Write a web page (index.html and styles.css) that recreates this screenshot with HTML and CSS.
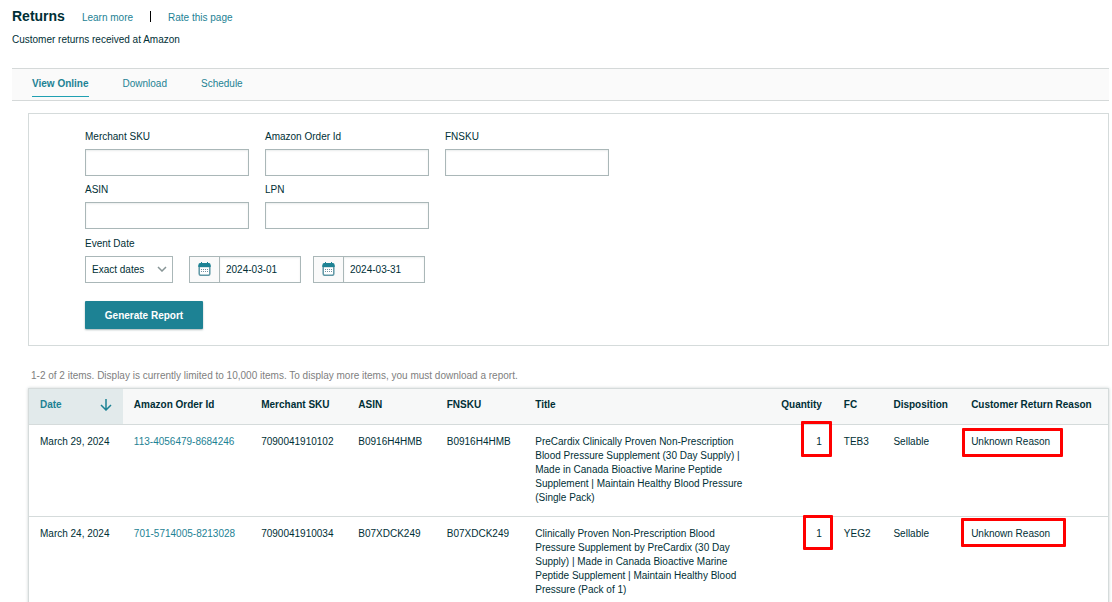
FILE: index.html
```html
<!DOCTYPE html>
<html lang="en">
<head>
<meta charset="utf-8">
<title>Returns</title>
<link rel="stylesheet" href="styles.css">
</head>
<body>
<header class="page-header">
  <div class="title-row">
    <h1 class="page-title">Returns</h1>
    <a class="link" href="#">Learn more</a>
    <span class="divider"></span>
    <a class="link" href="#">Rate this page</a>
  </div>
  <p class="subtitle">Customer returns received at Amazon</p>
</header>
<nav class="tabs">
  <a class="tab tab-active" href="#">View Online</a>
  <a class="tab" href="#">Download</a>
  <a class="tab" href="#">Schedule</a>
</nav>
<main class="content">
  <form class="filters">
    <div class="fields">
      <div class="field"><label for="sku">Merchant SKU</label><input class="box" id="sku" type="text"></div>
      <div class="field"><label for="order">Amazon Order Id</label><input class="box" id="order" type="text"></div>
      <div class="field"><label for="fnsku">FNSKU</label><input class="box" id="fnsku" type="text"></div>
      <div class="field"><label for="asin">ASIN</label><input class="box" id="asin" type="text"></div>
      <div class="field"><label for="lpn">LPN</label><input class="box" id="lpn" type="text"></div>
    </div>
    <div class="field">
      <label for="range">Event Date</label>
      <div class="dates">
        <div class="select-wrap">
          <select class="box select" id="range"><option>Exact dates</option></select>
          <svg class="chevron" width="10" height="6" viewBox="0 0 10 6" fill="none" stroke="#879596" stroke-width="1.5" aria-hidden="true"><path d="M1 1l4 4 4-4"/></svg>
        </div>
        <div class="date">
          <span class="date-icon"><svg width="13" height="14" viewBox="0 0 13 14" aria-hidden="true"><path fill="#1d8294" d="M2 1h1V0h1v1h5V0h1v1h1a1.500 1.500 0 0 1 1.500 1.500V5H.5V2.500A1.500 1.500 0 0 1 2 1z"/><path fill="#fff" stroke="#5f97a5" stroke-width="1.500" d="M1.200 4.500h10.600v7.300a1.500 1.500 0 0 1-1.500 1.500h-7.600a1.500 1.500 0 0 1-1.500-1.500z"/><path fill="#1d8294" d="M.5 3h12v2H.5z"/><path stroke="#6f8fa0" stroke-dasharray="1 1" d="M3 7.500h7M3 9.500h7"/></svg></span>
          <input class="date-input" type="text" aria-label="From date" value="2024-03-01">
        </div>
        <div class="date">
          <span class="date-icon"><svg width="13" height="14" viewBox="0 0 13 14" aria-hidden="true"><path fill="#1d8294" d="M2 1h1V0h1v1h5V0h1v1h1a1.500 1.500 0 0 1 1.500 1.500V5H.5V2.500A1.500 1.500 0 0 1 2 1z"/><path fill="#fff" stroke="#5f97a5" stroke-width="1.500" d="M1.200 4.500h10.600v7.300a1.500 1.500 0 0 1-1.500 1.500h-7.600a1.500 1.500 0 0 1-1.500-1.500z"/><path fill="#1d8294" d="M.5 3h12v2H.5z"/><path stroke="#6f8fa0" stroke-dasharray="1 1" d="M3 7.500h7M3 9.500h7"/></svg></span>
          <input class="date-input" type="text" aria-label="To date" value="2024-03-31">
        </div>
      </div>
    </div>
    <button class="submit" type="button">Generate Report</button>
  </form>
  <p class="summary">1-2 of 2 items. Display is currently limited to 10,000 items. To display more items, you must download a report.</p>
  <table class="results">
    <colgroup>
      <col class="c-date"><col class="c-order"><col class="c-sku"><col class="c-asin"><col class="c-fnsku"><col class="c-title"><col class="c-qty"><col class="c-fc"><col class="c-disp"><col class="c-reason">
    </colgroup>
    <thead>
      <tr>
        <th class="sorted"><div class="sort">Date<svg width="12" height="12" viewBox="0 0 12 12" fill="none" stroke="#1d8294" stroke-width="1.500" aria-hidden="true"><path d="M6 0v11M1 6l5 5 5-5"/></svg></div></th>
        <th>Amazon Order Id</th><th>Merchant SKU</th><th>ASIN</th><th>FNSKU</th><th>Title</th><th class="num">Quantity</th><th>FC</th><th>Disposition</th><th>Customer Return Reason</th>
      </tr>
    </thead>
    <tbody>
      <tr>
        <td>March 29, 2024</td>
        <td><a class="link" href="#">113-4056479-8684246</a></td>
        <td>7090041910102</td><td>B0916H4HMB</td><td>B0916H4HMB</td>
        <td class="product">PreCardix Clinically Proven Non-Prescription Blood Pressure Supplement (30 Day Supply) | Made in Canada Bioactive Marine Peptide Supplement | Maintain Healthy Blood Pressure (Single Pack)</td>
        <td class="num"><span class="mark mark-qty">1</span></td>
        <td>TEB3</td><td>Sellable</td>
        <td><span class="mark mark-reason">Unknown Reason</span></td>
      </tr>
      <tr>
        <td>March 24, 2024</td>
        <td><a class="link" href="#">701-5714005-8213028</a></td>
        <td>7090041910034</td><td>B07XDCK249</td><td>B07XDCK249</td>
        <td class="product">Clinically Proven Non-Prescription Blood Pressure Supplement by PreCardix (30 Day Supply) | Made in Canada Bioactive Marine Peptide Supplement | Maintain Healthy Blood Pressure (Pack of 1)</td>
        <td class="num"><span class="mark mark-qty-low">1</span></td>
        <td>YEG2</td><td>Sellable</td>
        <td><span class="mark mark-reason-wide">Unknown Reason</span></td>
      </tr>
    </tbody>
  </table>
</main>
</body>
</html>
```
FILE: styles.css
```css
* { box-sizing: border-box; }
body {
  margin: 0;
  padding: 8px 3px 0 12px;
  background: #fff;
  color: #002f36;
  font: 10px/14px "Liberation Sans", Arial, sans-serif;
}
.link, .tab { color: #1d8294; text-decoration: none; }
.title-row { display: flex; align-items: center; gap: 17px; height: 17px; }
.title-row .link { padding-top: 2px; }
.page-title { margin: 0; font-size: 14px; line-height: 17px; }
.divider { width: 1px; height: 11px; background: #000; }
.subtitle { margin: 8px 0 0; }
.tabs {
  display: flex;
  gap: 34px;
  height: 33px;
  margin-top: 21px;
  padding: 0 20px;
  background: #fafafa;
  border: solid #d5d9d9;
  border-width: 1px 0;
}
.tab { height: 28px; padding-top: 8px; }
.tab-active { font-weight: bold; border-bottom: 1px solid #20a0b2; }
.content { padding: 12px 0 0 16px; }
.filters { padding: 16px 56px; border: 1px solid #d5dbdb; }
.fields { display: grid; grid-template-columns: repeat(3, 164px); column-gap: 16px; margin-bottom: 1px; }
.field label { display: block; margin-bottom: 5px; }
.fields .field { padding-bottom: 7px; }
.box {
  display: block;
  width: 100%;
  height: 27px;
  padding: 0 7px;
  border: 1px solid #aab7b8;
  border-radius: 0;
  background: #fff;
  color: inherit;
  font: inherit;
  box-shadow: inset 0 1px 2px #eaeded;
}
.dates { display: flex; }
.select-wrap { position: relative; width: 88px; margin-right: 16px; }
.select { appearance: none; padding-left: 6px; box-shadow: none; }
.chevron { position: absolute; right: 6px; top: 10px; pointer-events: none; }
.date { display: flex; width: 112px; height: 27px; margin-right: 12px; border: 1px solid #aab7b8; }
.date-icon { flex: 0 0 30px; display: grid; place-items: center; padding-bottom: 2px; background: #fafafa; border-right: 1px solid #aab7b8; }
.date-input { flex: 1; min-width: 0; padding: 0 6px; border: 0; background: #fff; color: inherit; font: inherit; box-shadow: inset 0 1px 2px #eaeded; }
.submit {
  display: block;
  width: 118px;
  height: 28px;
  margin-top: 18px;
  padding: 2px 0 0;
  border: 0;
  border-radius: 1px;
  background: #1d8294;
  color: #fff;
  font: bold 10px/14px "Liberation Sans", Arial, sans-serif;
  box-shadow: 0 1px 2px #aab7b8;
}
.summary { margin: 23px 0 5px 3px; color: #808080; }
.results {
  width: 100%;
  table-layout: fixed;
  border-collapse: separate;
  border-spacing: 0;
  border: 1px solid #d5dbdb;
  box-shadow: 0 0 3px #ccd3d3;
}
.c-date { width: 8.7%; }
.c-order { width: 11.8%; }
.c-sku { width: 9%; }
.c-asin { width: 8.2%; }
.c-fnsku { width: 8.2%; }
.c-title { width: 22.5%; }
.c-qty { width: 6.1%; }
.c-fc { width: 4.6%; }
.c-disp { width: 7.2%; }
.c-reason { width: 13.7%; }
.results th { height: 36px; padding: 0 11px 4px; background: #f7f8f8; border-bottom: 1px solid #d5dbdb; text-align: left; white-space: nowrap; }
.results td { padding: 10px 11px 11px; border-bottom: 1px solid #d5dbdb; vertical-align: top; }
.results .sorted { background: #e2eaeb; color: #1d8294; }
.results .num { text-align: right; }
.results .product { padding-right: 20px; }
.sort { display: flex; align-items: center; justify-content: space-between; }
.mark { position: relative; }
.mark::after { content: ""; position: absolute; border: 3px solid #f00; border-radius: 1px; }
.mark-qty::after { inset: -15px -10px -10px -15px; }
.mark-qty-low::after { inset: -13px -11px -11px -13px; }
.mark-reason::after { inset: -8px -13px -10px -9px; }
.mark-reason-wide::after { inset: -10px -16px -8px -10px; }
```
